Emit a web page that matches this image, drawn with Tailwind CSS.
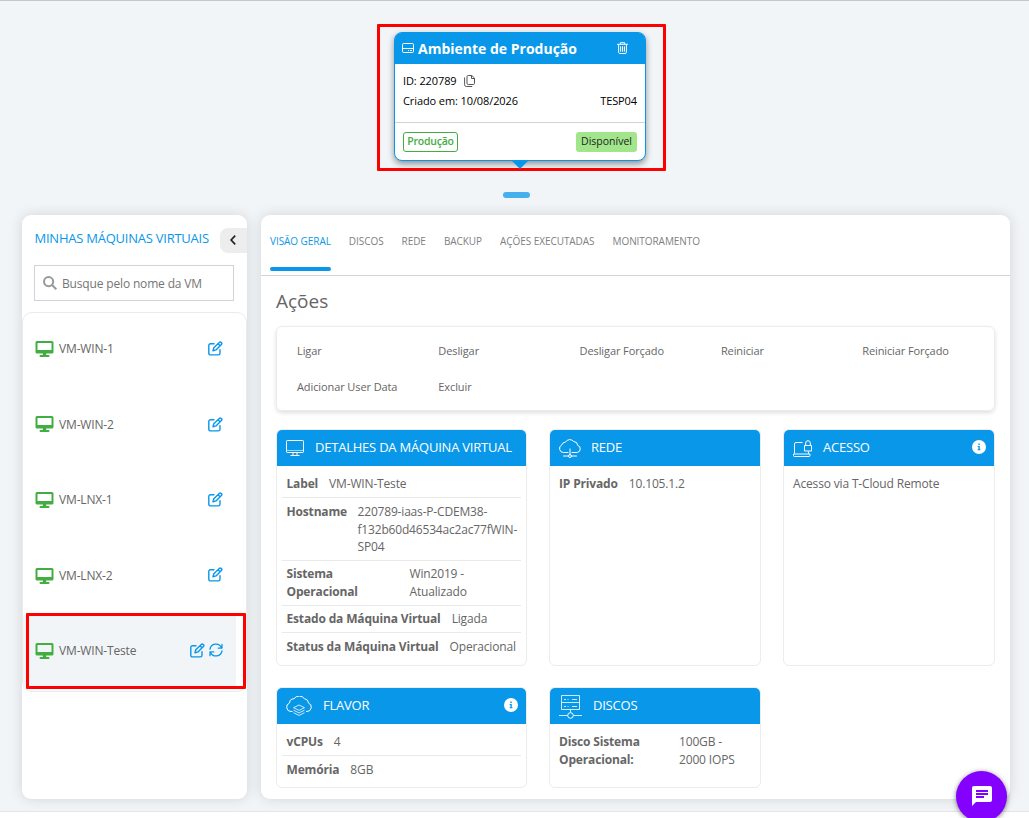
<!DOCTYPE html>
<html lang="pt-BR">
  <head>
    <meta charset="UTF-8" />
    <script src="https://cdn.jsdelivr.net/npm/@tailwindcss/browser@4"></script>
    <title>Máquinas Virtuais</title>
  </head>
  <body class="bg-white font-['Open_Sans',sans-serif] text-[#666] h-[818px] overflow-hidden">
    <!-- icons shared by the VM list and card headers -->
    <svg class="hidden">
      <symbol id="monitor" viewBox="0 0 18 16">
        <path fill="currentColor" fill-rule="evenodd" d="M1.500 0h15A1.500 1.500 0 0 1 18 1.500v9.500a1.500 1.500 0 0 1-1.500 1.500H10.700v1.500h2.300a1 1 0 0 1 0 2H5a1 1 0 0 1 0-2h2.300v-1.500H1.500A1.500 1.500 0 0 1 0 11V1.500A1.500 1.500 0 0 1 1.500 0ZM2 2v7h14V2Z" />
      </symbol>
      <symbol id="edit" viewBox="0 0 15 15">
        <g fill="none" stroke="currentColor" stroke-width="1.400" stroke-linejoin="round" stroke-linecap="round">
          <path d="M6 2.700H2.500A1.700 1.700 0 0 0 .8 4.400v7.800a1.700 1.700 0 0 0 1.700 1.700h7.800a1.700 1.700 0 0 0 1.700-1.700V8.600" />
          <path d="M11.300 1.400a1.350 1.350 0 0 1 1.900 0l.2.200a1.350 1.350 0 0 1 0 1.900L8 8.900l-3 .8.8-3ZM10 2.700 12.100 4.800" />
        </g>
      </symbol>
      <symbol id="refresh" viewBox="0 0 14 14">
        <g fill="none" stroke="currentColor" stroke-width="1.300" stroke-linejoin="round" stroke-linecap="round">
          <path d="M1 6.200A6 6 0 0 1 12.400 4.600M13 1.300v3.800H9.200M13 7.800A6 6 0 0 1 1.600 9.400M1 12.700V8.900h3.800" />
        </g>
      </symbol>
      <symbol id="info" viewBox="0 0 14 14">
        <circle cx="7" cy="7" r="7" fill="#fff" />
        <path d="M6.300 3.600h1.500v1.500H6.300ZM5.600 6h2.200v3.200h.7v1.100H5.600V9.200h.8V7.100h-.8Z" fill="#0997ea" />
      </symbol>
    </svg>

    <div class="h-[812px] bg-[#f1f5f8] border-t border-b border-t-[#c3c8cc] border-b-[#e3e5e7]">
      <!-- environment card -->
      <div class="h-[214px] pt-[23px] flex flex-col items-center pl-[14px]">
        <div class="w-[289px] h-[147px] border-3 border-[#f00] rounded-[1px] pt-[5px] pl-[14px]">
          <div class="relative w-[252px] h-[129px] rounded-lg bg-white border border-[#0997ea] shadow-[0_3px_6px_rgba(0,0,0,0.4)] text-black text-[11px]">
            <div class="h-[31px] rounded-t-md bg-[#0997ea] text-white flex items-center pl-[7px] pr-[17px]">
              <svg class="w-[12px] h-[10px] mr-[4px] -mt-[2px]" viewBox="0 0 12 10" fill="none" stroke="#fff"><rect x=".5" y=".5" width="11" height="9" rx="1.200" /><path d="M.5 5.500h11M6 7.500h1M8 7.500h2" /></svg>
              <span class="text-[14px] leading-[20px] font-bold whitespace-nowrap">Ambiente de Produção</span>
              <svg class="w-[11px] h-[12px] ml-auto -mt-[2px]" viewBox="0 0 11 12" fill="none" stroke="#fff" stroke-linejoin="round"><path d="M0 2.300h11M3.300 2V.7h4.400V2M1.600 2.500v7.800a1.200 1.200 0 0 0 1.200 1.200h5.400a1.200 1.200 0 0 0 1.200-1.200V2.500M3.600 4.300v5.400M5.500 4.300v5.400M7.400 4.300v5.400" /></svg>
            </div>
            <div class="h-[59px] border-b border-[#ced4da] px-[8px] pt-[7px]">
              <div class="h-[20px] flex items-center tracking-[-0.1px]">
                ID: 220789
                <svg class="w-[11px] h-[12px] ml-[7px]" viewBox="0 0 11 12" fill="none" stroke="#555"><path d="M4.200.5h3.600l2.700 2.600v5.200a1.200 1.200 0 0 1-1.200 1.200H4.200A1.200 1.200 0 0 1 3 8.300V1.700A1.200 1.200 0 0 1 4.200.5ZM7.500.5v3h3M.6 2.500v7.200a1.800 1.800 0 0 0 1.800 1.800h5.800" /></svg>
              </div>
              <div class="h-[20px] flex items-center justify-between tracking-[-0.1px]"><span>Criado em: 10/08/2026</span><span>TESP04</span></div>
            </div>
            <div class="h-[37px] flex items-center justify-between px-[8px]">
              <span class="w-[55px] h-[20px] border border-[#44ad42] rounded-[3px] text-[#44ad42] text-[10.500px] leading-[17px] text-center font-semibold tracking-[-0.25px]">Produção</span>
              <span class="w-[61px] h-[20px] bg-[#a2e68c] rounded-[3px] text-[#222] text-[10.500px] leading-[19px] text-center font-medium">Disponível</span>
            </div>
            <div class="absolute top-[127px] left-[116px] border-x-[9px] border-x-transparent border-t-[9px] border-t-[#0997ea]"></div>
          </div>
        </div>
        <div class="w-[27px] h-[6px] rounded-full bg-[#45b0ec] mt-[21px] mr-[10px]"></div>
      </div>

      <div class="flex gap-[14px] pl-[22px]">
        <!-- VM list -->
        <aside class="w-[225px] h-[584px] bg-white rounded-[9px] shadow-[0_0_14px_rgba(0,0,0,0.13)]">
          <div class="h-[97px] pt-[13px]">
            <div class="flex justify-between items-center h-[25px] pl-[12.500px]">
              <h2 class="text-[13px] text-[#0997ea] whitespace-nowrap tracking-[-0.24px] -mt-[3px]">MINHAS MÁQUINAS VIRTUAIS</h2>
              <button class="w-[27px] h-[25px] bg-[#ededed] rounded-l-[8px] flex items-center pl-[10px] pb-[2px]">
                <svg class="w-[6px] h-[10px]" viewBox="0 0 6 10" fill="none" stroke="#222" stroke-width="1.700"><path d="M5.200.7 1.100 5l4.100 4.300" /></svg>
              </button>
            </div>
            <div class="mt-[12px] ml-[12px] w-[200px] h-[36px] border border-[#ced4da] flex items-center pl-[8px] text-[12px] tracking-[-0.16px] text-[#757575]">
              <svg class="w-[14px] h-[14px] mr-[5px]" viewBox="0 0 14 14" fill="none" stroke="#999" stroke-width="2"><circle cx="5.600" cy="5.600" r="4.600" /><path d="m9 9 4.300 4.300" /></svg>
              <span class="pt-[2px]">Busque pelo nome da VM</span>
            </div>
          </div>
          <div class="h-[380px] rounded-[10px] border border-[#e9ebec] text-[12px] tracking-[-0.16px]">
            <div class="h-[75.500px] flex items-center pl-[12px] pr-[23px] pb-[3px]">
              <svg class="w-[19px] h-[16px] mr-[5px] text-[#44ad42]"><use href="#monitor" /></svg>VM-WIN-1
              <svg class="w-[15px] h-[15px] ml-auto -mt-[2px] text-[#0997ea]"><use href="#edit" /></svg>
            </div>
            <div class="h-[75.500px] flex items-center pl-[12px] pr-[23px] pb-[3px]">
              <svg class="w-[19px] h-[16px] mr-[5px] -mt-[1px] text-[#44ad42]"><use href="#monitor" /></svg>VM-WIN-2
              <svg class="w-[15px] h-[15px] ml-auto -mt-[1px] text-[#0997ea]"><use href="#edit" /></svg>
            </div>
            <div class="h-[75.500px] flex items-center pl-[12px] pr-[23px] pb-[3px]">
              <svg class="w-[19px] h-[16px] mr-[5px] text-[#44ad42]"><use href="#monitor" /></svg>VM-LNX-1
              <svg class="w-[15px] h-[15px] ml-auto -mt-[2px] text-[#0997ea]"><use href="#edit" /></svg>
            </div>
            <div class="h-[75.500px] flex items-center pl-[12px] pr-[23px] pb-[3px]">
              <svg class="w-[19px] h-[16px] mr-[5px] text-[#44ad42]"><use href="#monitor" /></svg>VM-LNX-2
              <svg class="w-[15px] h-[15px] ml-auto -mt-[2px] text-[#0997ea]"><use href="#edit" /></svg>
            </div>
            <div class="relative w-[213px] h-[74px] bg-[#f1f5f8] flex items-center pl-[12px] pr-[13px] pb-[2px]">
              <svg class="w-[19px] h-[16px] mr-[5px] text-[#44ad42]"><use href="#monitor" /></svg>VM-WIN-Teste
              <svg class="w-[15px] h-[15px] ml-auto mr-[4px] -mt-[2px] text-[#0997ea]"><use href="#edit" /></svg>
              <svg class="w-[14px] h-[14px] -mt-[2px] text-[#0997ea]"><use href="#refresh" /></svg>
              <div class="absolute -top-[2px] left-[3px] w-[220px] h-[76px] border-3 border-[#f00] rounded-[1px]"></div>
            </div>
          </div>
        </aside>

        <!-- VM details -->
        <main class="w-[749px] h-[584px] bg-white rounded-[9px] shadow-[0_0_14px_rgba(0,0,0,0.13)]">
          <nav class="h-[61px] border-b border-[#ced4da] pl-[9px] flex gap-[18px] text-[10px] leading-[18px] tracking-[-0.06px] text-[#808080] whitespace-nowrap">
            <a class="h-[56px] pt-[17px] flex flex-col justify-between text-[#0997ea]">VISÃO GERAL<span class="h-[4px] rounded-[2px] bg-[#0997ea]"></span></a>
            <a class="pt-[17px]">DISCOS</a>
            <a class="pt-[17px]">REDE</a>
            <a class="pt-[17px]">BACKUP</a>
            <a class="pt-[17px]">AÇÕES EXECUTADAS</a>
            <a class="pt-[17px]">MONITORAMENTO</a>
          </nav>
          <div class="px-[15px]">
            <h1 class="h-[50px] pt-[13px] text-[19px] leading-[24px]">Ações</h1>
            <div class="h-[85px] rounded-md border border-[#ececec] shadow-[0_2px_4px_rgba(0,0,0,0.13)] grid grid-cols-[repeat(5,141.300px)] auto-rows-[36px] pl-[20px] pt-[6px] text-[11px] tracking-[-0.1px] items-center">
              <span>Ligar</span><span>Desligar</span><span>Desligar Forçado</span><span>Reiniciar</span><span>Reiniciar Forçado</span>
              <span>Adicionar User Data</span><span>Excluir</span>
            </div>

            <div class="mt-[18px] grid grid-cols-[251px_212px_212px] grid-rows-[237px_101px] gap-x-[22px] gap-y-[21px] text-[12px] leading-[18px] tracking-[-0.16px] whitespace-nowrap">
              <section class="border border-[#ececec] rounded-[6px]">
                <div class="h-[36px] rounded-t-[5px] bg-[#0997ea] text-white text-[13px] tracking-[-0.22px] flex items-center pl-[9px] pb-[2px]">
                  <svg class="w-[18px] h-[16px] mr-[11px] mt-[2px]" viewBox="0 0 18 16" fill="none" stroke="#fff"><rect x=".5" y=".5" width="17" height="12" rx=".8" /><path d="M.5 10.500h17" stroke-opacity=".6" /><path d="M7 13v2M11 13v2M4.500 15.500h9" /></svg>
                  DETALHES DA MÁQUINA VIRTUAL
                </div>
                <div class="px-[5px] pt-[4px]">
                  <div class="flex gap-[11px] px-[4.500px] pt-[5px] pb-[4px] border-b border-[#e9e9e9]"><b>Label</b><span>VM-WIN-Teste</span></div>
                  <div class="flex gap-[11px] h-[63px] px-[4.500px] pt-[5px] border-b border-[#e9e9e9]"><b>Hostname</b><span class="-ml-[0.500px] leading-[17.700px] tracking-[-0.18px]">220789-iaas-P-CDEM38-<br />f132b60d46534ac2ac77fWIN-<br />SP04</span></div>
                  <div class="flex px-[4.500px] py-[4px] border-b border-[#e9e9e9]"><b class="w-[123px]">Sistema<br />Operacional</b><span>Win2019 -<br />Atualizado</span></div>
                  <div class="flex gap-[11px] px-[4.500px] py-[4px] border-b border-[#e9e9e9]"><b>Estado da Máquina Virtual</b><span>Ligada</span></div>
                  <div class="flex gap-[11px] px-[4.500px] py-[5px]"><b>Status da Máquina Virtual</b><span>Operacional</span></div>
                </div>
              </section>

              <section class="border border-[#ececec] rounded-[6px]">
                <div class="h-[36px] rounded-t-[5px] bg-[#0997ea] text-white text-[13px] tracking-[-0.22px] flex items-center pl-[9px] pb-[2px]">
                  <svg class="w-[22px] h-[19px] mr-[10px] mt-[3px]" viewBox="0 0 22 19" fill="none" stroke="#fff" stroke-linecap="round"><path d="M9 13.500H4.600A4 4 0 0 1 2.800 5.900 4 4 0 0 1 6.500 3.100 5 5 0 0 1 14.800 2.600 3.700 3.700 0 0 1 18.600 6.300 3.700 3.700 0 0 1 18.200 13.500H13M11 10v6M4.500 17H9M13 17h4.500" /><circle cx="11" cy="17" r="1.500" /></svg>
                  REDE
                </div>
                <div class="flex gap-[11px] px-[9px] pt-[9px]"><b>IP Privado</b><span>10.105.1.2</span></div>
              </section>

              <section class="border border-[#ececec] rounded-[6px]">
                <div class="h-[36px] rounded-t-[5px] bg-[#0997ea] text-white text-[13px] tracking-[-0.22px] flex items-center pl-[9px] pr-[8px] pb-[2px]">
                  <svg class="w-[19px] h-[17px] mr-[11px] mt-[3px]" viewBox="0 0 19 17" fill="none" stroke="#fff"><path d="M9.500 2.500H3A1.500 1.500 0 0 0 1.500 4v9.500M.5 14h16.500v1.500a1 1 0 0 1-1 1H1.500a1 1 0 0 1-1-1ZM15.500 11.500V14" /><path d="M11.500 5.500h7v5.500h-7ZM12.700 5.500V3a2.300 2.300 0 0 1 4.600 0v2.500" /></svg>
                  ACESSO
                  <svg class="w-[14px] h-[14px] ml-auto"><use href="#info" /></svg>
                </div>
                <div class="px-[9px] pt-[9px]">Acesso via T-Cloud Remote</div>
              </section>

              <section class="border border-[#ececec] rounded-[6px]">
                <div class="h-[36px] rounded-t-[5px] bg-[#0997ea] text-white text-[13px] tracking-[-0.22px] flex items-center pl-[9px] pr-[8px] pb-[2px]">
                  <svg class="w-[26px] h-[20px] mr-[11px] mt-[1px]" viewBox="0 0 26 20" fill="none" stroke="#fff" stroke-linejoin="round"><path d="M6.500 15.500H5A4.400 4.400 0 0 1 3.500 7 4.600 4.600 0 0 1 8 2.700 6.500 6.500 0 0 1 18.500 2.700 4.600 4.600 0 0 1 22.500 7 4.400 4.400 0 0 1 21 15.500h-1" /><path stroke-width=".8" d="m13 9 5.500 2.700-5.500 2.700-5.500-2.700ZM7.500 14.200 13 16.900l5.500-2.700M7.500 16.700 13 19.400l5.500-2.700" /></svg>
                  FLAVOR
                  <svg class="w-[14px] h-[14px] ml-auto"><use href="#info" /></svg>
                </div>
                <div class="px-[5px] pt-[4px]">
                  <div class="flex gap-[11px] px-[4.500px] pt-[5px] pb-[4px] border-b border-[#e9e9e9]"><b>vCPUs</b><span>4</span></div>
                  <div class="flex gap-[11px] px-[4.500px] py-[5px]"><b>Memória</b><span>8GB</span></div>
                </div>
              </section>

              <section class="border border-[#ececec] rounded-[6px]">
                <div class="h-[36px] rounded-t-[5px] bg-[#0997ea] text-white text-[13px] tracking-[-0.22px] flex items-center pl-[9px] pb-[2px]">
                  <svg class="w-[23px] h-[24px] mr-[11px] mt-[4px]" viewBox="0 0 23 24" fill="none" stroke="#fff"><path stroke-opacity=".8" d="M2.500.5h18v14h-18ZM2.500 7.500h18M5 4.500h2M8.500 4.500h1M13 4.500h5M5 11.500h2M8.500 11.500h1M13 11.500h5M11.500 14.500v3M0 20.500h8.500M14.500 20.500H23" /><circle cx="11.500" cy="20.500" r="2.800" /></svg>
                  DISCOS
                </div>
                <div class="flex px-[9px] pt-[9px]"><b class="w-[120px]">Disco Sistema<br />Operacional:</b><span>100GB -<br />2000 IOPS</span></div>
              </section>
            </div>
          </div>
        </main>
      </div>
    </div>

    <!-- chat button -->
    <button class="fixed left-[956px] top-[771px] w-[51px] h-[51px] rounded-full bg-[#8400ff] shadow-[0_1px_5px_rgba(0,0,0,0.5)] flex items-center justify-center">
      <svg class="w-[20px] h-[20px] mt-[-2px]" viewBox="0 0 20 20"><path fill="#fff" d="M2 0h16a2 2 0 0 1 2 2v12a2 2 0 0 1-2 2H4l-4 4V2a2 2 0 0 1 2-2Z" /><path stroke="#8400ff" stroke-width="2" d="M4 5h12M4 8h12M4 11h8" /></svg>
    </button>
  </body>
</html>
